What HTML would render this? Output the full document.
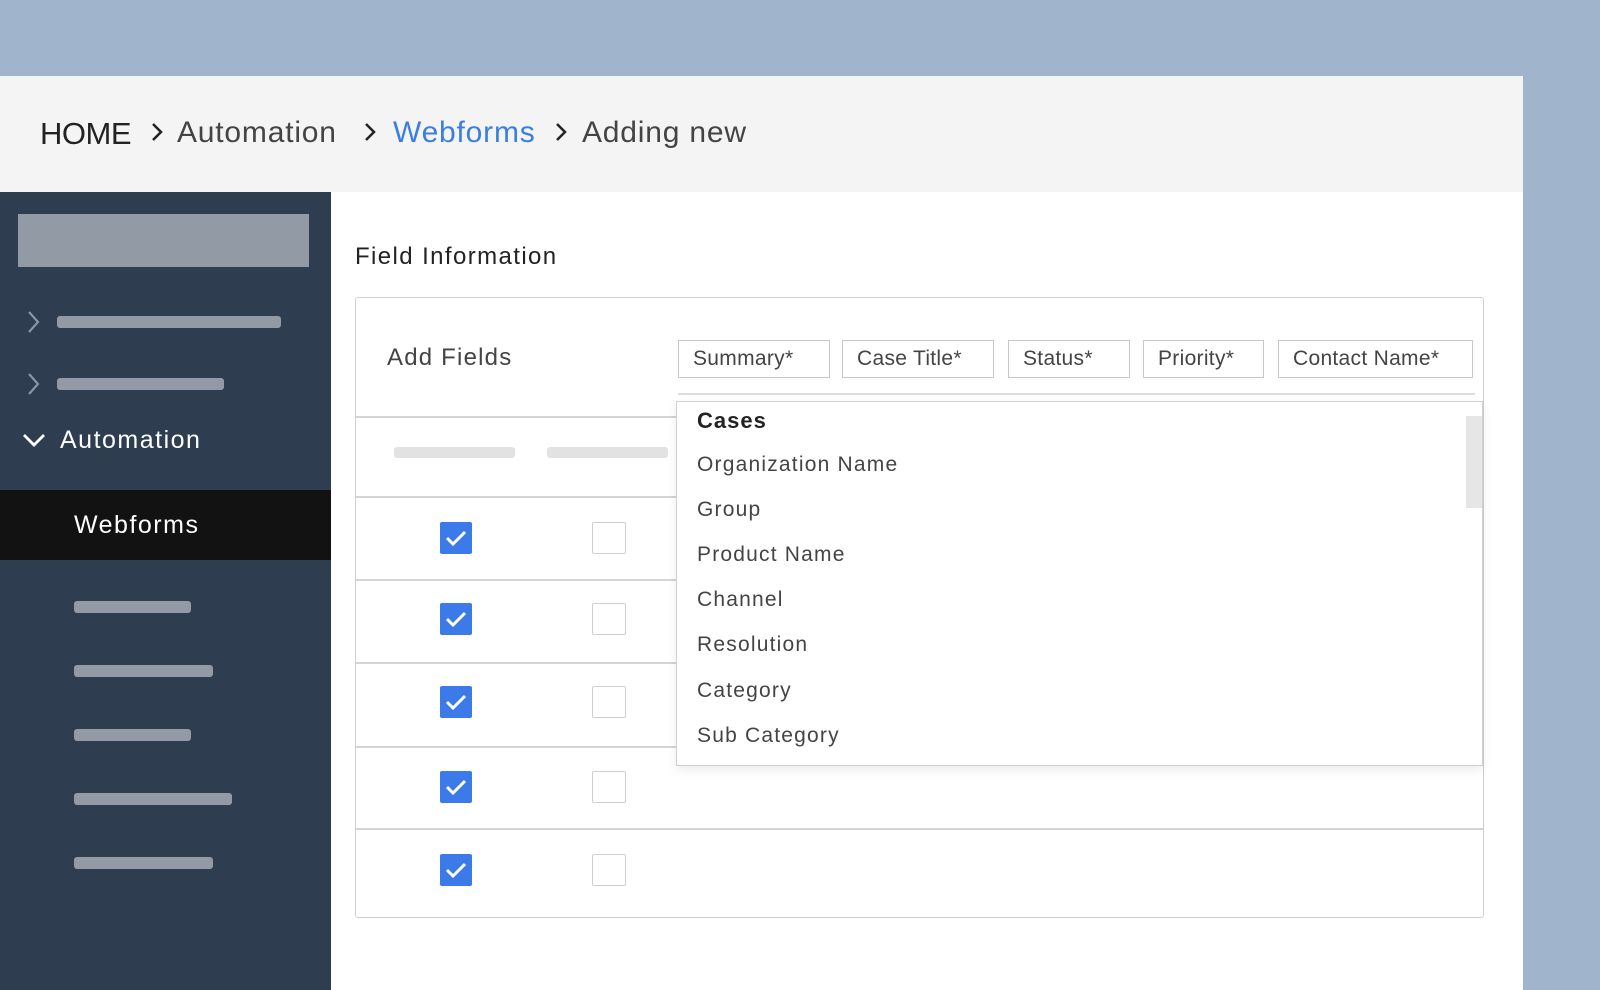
<!DOCTYPE html>
<html><head><meta charset="utf-8"><style>
*{margin:0;padding:0;box-sizing:border-box}
body{width:1600px;height:990px;background:#a0b5cc;position:relative;overflow:hidden;font-family:"Liberation Sans",sans-serif;letter-spacing:1px}
.a{position:absolute;white-space:nowrap}
.bar{position:absolute;background:#929ba5;height:12px;border-radius:3px}
.chip{position:absolute;top:340px;height:38px;border:1px solid #c8c8c8;font-size:21px;color:#444;line-height:36px;padding-left:14px;background:#fff;white-space:nowrap;letter-spacing:.3px}
.it{position:absolute;left:697px;font-size:21px;color:#444;letter-spacing:1.2px}
.hl{position:absolute;left:356px;width:321px;height:2px;background:#d4d4d4}
.cb{position:absolute;left:440px;width:32px;height:32px;background:#3b7ae8;border-radius:2px}
.ec{position:absolute;left:592px;width:34px;height:32px;border:1px solid #cfcfcf;border-radius:2px;background:#fff}
</style></head><body>
<div class="a" style="left:0;top:76px;width:1523px;height:914px;background:#fff"></div>
<div class="a" style="left:0;top:76px;width:1523px;height:116px;background:#f4f4f4"></div>
<div class="a" style="left:40px;top:116px;font-size:31px;color:#222;letter-spacing:-.5px">HOME</div>
<div class="a" style="left:177px;top:116px;font-size:30px;color:#444;letter-spacing:.8px">Automation</div>
<div class="a" style="left:393px;top:116px;font-size:30px;color:#3a7fe0;letter-spacing:.8px">Webforms</div>
<div class="a" style="left:582px;top:116px;font-size:30px;color:#444;letter-spacing:.8px">Adding new</div>
<svg class="a" style="left:0;top:0" width="1600" height="990">
<g fill="none" stroke="#222" stroke-width="2.5"><path d="M153 124l8 8-8 8M366 124l8 8-8 8M557 124l8 8-8 8"/></g>
</svg>
<div class="a" style="left:0;top:192px;width:331px;height:798px;background:#2e3d4f"></div>
<div class="a" style="left:18px;top:214px;width:291px;height:53px;background:#929ba5"></div>
<div class="bar" style="left:57px;top:316px;width:224px"></div>
<div class="bar" style="left:57px;top:378px;width:167px"></div>
<div class="a" style="left:60px;top:426px;font-size:25px;color:#fff;letter-spacing:1.5px">Automation</div>
<div class="a" style="left:0;top:490px;width:331px;height:70px;background:#121212"></div>
<div class="a" style="left:74px;top:511px;font-size:25px;color:#fff;letter-spacing:1.5px">Webforms</div>
<div class="bar" style="left:74px;top:601px;width:117px"></div>
<div class="bar" style="left:74px;top:665px;width:139px"></div>
<div class="bar" style="left:74px;top:729px;width:117px"></div>
<div class="bar" style="left:74px;top:793px;width:158px"></div>
<div class="bar" style="left:74px;top:857px;width:139px"></div>
<svg class="a" style="left:0;top:0" width="340" height="990">
<g fill="none" stroke="#8a96a3" stroke-width="2.2"><path d="M29 312l9 10-9 10M29 374l9 10-9 10"/></g>
<path d="M24 435l10 10 10-10" fill="none" stroke="#fff" stroke-width="2.8"/>
</svg>
<div class="a" style="left:355px;top:243px;font-size:24px;color:#222;letter-spacing:1.4px">Field Information</div>
<div class="a" style="left:355px;top:297px;width:1129px;height:621px;border:1px solid #cfcfcf;border-radius:3px"></div>
<div class="a" style="left:387px;top:344px;font-size:24px;color:#444;letter-spacing:1.2px">Add Fields</div>
<div class="chip" style="left:678px;width:152px">Summary*</div>
<div class="chip" style="left:842px;width:152px">Case Title*</div>
<div class="chip" style="left:1008px;width:122px">Status*</div>
<div class="chip" style="left:1143px;width:121px">Priority*</div>
<div class="chip" style="left:1278px;width:195px">Contact Name*</div>
<div class="a" style="left:678px;top:393px;width:797px;height:2px;background:#ddd"></div>
<div class="hl" style="top:416px"></div>
<div class="hl" style="top:496px"></div>
<div class="hl" style="top:579px"></div>
<div class="hl" style="top:662px"></div>
<div class="a" style="left:356px;top:746px;width:1127px;height:2px;background:#d4d4d4"></div>
<div class="a" style="left:356px;top:828px;width:1127px;height:2px;background:#d4d4d4"></div>
<div class="a" style="left:394px;top:447px;width:121px;height:11px;background:#e2e2e2;border-radius:3px"></div>
<div class="a" style="left:547px;top:447px;width:121px;height:11px;background:#e2e2e2;border-radius:3px"></div>
<div class="cb" style="top:522px"></div><div class="cb" style="top:603px"></div><div class="cb" style="top:686px"></div><div class="cb" style="top:771px"></div><div class="cb" style="top:854px"></div>
<div class="ec" style="top:522px"></div><div class="ec" style="top:603px"></div><div class="ec" style="top:686px"></div><div class="ec" style="top:771px"></div><div class="ec" style="top:854px"></div>
<svg class="a" style="left:0;top:0" width="700" height="990">
<g fill="none" stroke="#fff" stroke-width="3"><path d="M447 538l6 6 12-12M447 619l6 6 12-12M447 702l6 6 12-12M447 787l6 6 12-12M447 870l6 6 12-12"/></g>
</svg>
<div class="a" style="left:676px;top:401px;width:807px;height:365px;background:#fff;border:1px solid #d0d0d0;box-shadow:0 4px 10px rgba(0,0,0,.08)"></div>
<div class="a" style="left:1466px;top:416px;width:16px;height:92px;background:#e6e6e6"></div>
<div class="it" style="top:408px;font-weight:bold;color:#222;font-size:22px;letter-spacing:1px">Cases</div>
<div class="it" style="top:453px">Organization Name</div>
<div class="it" style="top:498px">Group</div>
<div class="it" style="top:543px">Product Name</div>
<div class="it" style="top:588px">Channel</div>
<div class="it" style="top:633px">Resolution</div>
<div class="it" style="top:679px">Category</div>
<div class="it" style="top:724px">Sub Category</div>
</body></html>
